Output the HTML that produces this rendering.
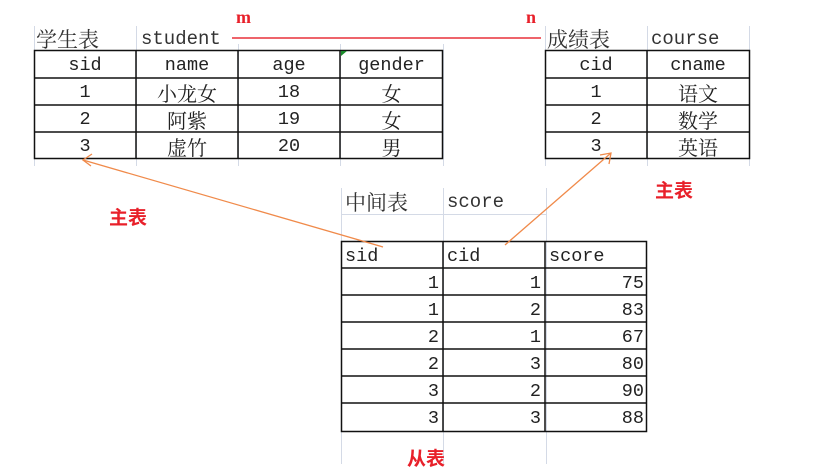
<!DOCTYPE html>
<html><head><meta charset="utf-8"><style>
body{margin:0;width:839px;height:474px;background:#fff;position:relative;overflow:hidden;font-family:"Liberation Mono","Noto Serif CJK SC",monospace;color:#222;}
.c{position:absolute;box-sizing:border-box;font-size:18.5px;line-height:27px;white-space:nowrap;}
.k{font-family:"Noto Serif CJK SC",serif;font-size:20px;line-height:27px;}
.t{position:absolute;font-size:19px;color:#333;white-space:nowrap;}
.tk{font-family:"Noto Serif CJK SC",serif;font-size:21px;}
.r{position:absolute;color:#e8202a;font-weight:bold;font-family:"Noto Sans CJK SC",sans-serif;font-size:19px;}
.g{position:absolute;background:#d4dae6;}
</style></head><body>
<div class="g" style="left:34px;top:26px;width:1px;height:140px"></div>
<div class="g" style="left:136px;top:26px;width:1px;height:140px"></div>
<div class="g" style="left:238px;top:44px;width:1px;height:122px"></div>
<div class="g" style="left:340px;top:44px;width:1px;height:122px"></div>
<div class="g" style="left:443px;top:44px;width:1px;height:122px"></div>
<div class="g" style="left:545px;top:26px;width:1px;height:140px"></div>
<div class="g" style="left:647px;top:26px;width:1px;height:140px"></div>
<div class="g" style="left:749px;top:26px;width:1px;height:140px"></div>
<div class="g" style="left:341px;top:188px;width:1px;height:276px"></div>
<div class="g" style="left:443px;top:188px;width:1px;height:276px"></div>
<div class="g" style="left:546px;top:188px;width:1px;height:276px"></div>
<div class="g" style="left:341px;top:214px;width:205px;height:1px"></div>

<div class="t tk" style="left:36px;top:24px">学生表</div>
<div class="t" style="left:141px;top:28px">student</div>
<div class="t tk" style="left:547px;top:24px">成绩表</div>
<div class="t" style="left:651px;top:28px">course</div>
<div class="t tk" style="left:345px;top:187px">中间表</div>
<div class="t" style="left:447px;top:191px">score</div>

<svg width="839" height="474" style="position:absolute;left:0;top:0" xmlns="http://www.w3.org/2000/svg">
<g stroke="#111" stroke-width="1.5" fill="none">
<rect x="34.5" y="50.5" width="408" height="108"/>
<line x1="34" y1="78" x2="443" y2="78"/><line x1="34" y1="105" x2="443" y2="105"/><line x1="34" y1="132" x2="443" y2="132"/>
<line x1="136" y1="50" x2="136" y2="159"/><line x1="238" y1="50" x2="238" y2="159"/><line x1="340" y1="50" x2="340" y2="159"/>
<rect x="545.5" y="50.5" width="204" height="108"/>
<line x1="545" y1="78" x2="750" y2="78"/><line x1="545" y1="105" x2="750" y2="105"/><line x1="545" y1="132" x2="750" y2="132"/>
<line x1="647" y1="50" x2="647" y2="159"/>
<rect x="341.5" y="241.5" width="305" height="190"/>
<line x1="341" y1="268" x2="647" y2="268"/><line x1="341" y1="295" x2="647" y2="295"/><line x1="341" y1="322" x2="647" y2="322"/>
<line x1="341" y1="349" x2="647" y2="349"/><line x1="341" y1="376" x2="647" y2="376"/><line x1="341" y1="403" x2="647" y2="403"/>
<line x1="443" y1="241" x2="443" y2="432"/><line x1="545" y1="241" x2="545" y2="432"/>
</g>
<polygon points="341,51 347,51 341,56" fill="#1a8a2a"/>
<line x1="232" y1="38" x2="541" y2="38" stroke="#e8303a" stroke-width="1.5"/>
<g stroke="#f08a4a" stroke-width="1.3" fill="none">
<line x1="383" y1="247" x2="83" y2="160"/>
<polyline points="92,154 83,160 91,166"/>
<line x1="505" y1="245" x2="611" y2="153"/>
<polyline points="600,155 611,153 609,164"/>
</g>
</svg>
<div class="r" style="left:236px;top:7px;font-family:'Liberation Serif',serif;font-size:18px">m</div>
<div class="r" style="left:526px;top:7px;font-family:'Liberation Serif',serif;font-size:18px">n</div>
<div class="r" style="left:109px;top:203px">主表</div>
<div class="r" style="left:655px;top:176px">主表</div>
<div class="r" style="left:407px;top:444px">从表</div>

<div class="c" style="left:34px;top:52px;width:102px;text-align:center">sid</div>
<div class="c" style="left:136px;top:52px;width:102px;text-align:center">name</div>
<div class="c" style="left:238px;top:52px;width:102px;text-align:center">age</div>
<div class="c" style="left:340px;top:52px;width:103px;text-align:center">gender</div>
<div class="c" style="left:34px;top:79px;width:102px;text-align:center">1</div>
<div class="c k" style="left:136px;top:79px;width:102px;text-align:center">小龙女</div>
<div class="c" style="left:238px;top:79px;width:102px;text-align:center">18</div>
<div class="c k" style="left:340px;top:79px;width:103px;text-align:center">女</div>
<div class="c" style="left:34px;top:106px;width:102px;text-align:center">2</div>
<div class="c k" style="left:136px;top:106px;width:102px;text-align:center">阿紫</div>
<div class="c" style="left:238px;top:106px;width:102px;text-align:center">19</div>
<div class="c k" style="left:340px;top:106px;width:103px;text-align:center">女</div>
<div class="c" style="left:34px;top:133px;width:102px;text-align:center">3</div>
<div class="c k" style="left:136px;top:133px;width:102px;text-align:center">虚竹</div>
<div class="c" style="left:238px;top:133px;width:102px;text-align:center">20</div>
<div class="c k" style="left:340px;top:133px;width:103px;text-align:center">男</div>
<div class="c" style="left:545px;top:52px;width:102px;text-align:center">cid</div>
<div class="c" style="left:647px;top:52px;width:102px;text-align:center">cname</div>
<div class="c" style="left:545px;top:79px;width:102px;text-align:center">1</div>
<div class="c k" style="left:647px;top:79px;width:102px;text-align:center">语文</div>
<div class="c" style="left:545px;top:106px;width:102px;text-align:center">2</div>
<div class="c k" style="left:647px;top:106px;width:102px;text-align:center">数学</div>
<div class="c" style="left:545px;top:133px;width:102px;text-align:center">3</div>
<div class="c k" style="left:647px;top:133px;width:102px;text-align:center">英语</div>
<div class="c" style="left:345px;top:243px">sid</div>
<div class="c" style="left:447px;top:243px">cid</div>
<div class="c" style="left:549px;top:243px">score</div>
<div class="c" style="left:341px;top:270px;width:98px;text-align:right">1</div><div class="c" style="left:443px;top:270px;width:98px;text-align:right">1</div><div class="c" style="left:545px;top:270px;width:99px;text-align:right">75</div>
<div class="c" style="left:341px;top:297px;width:98px;text-align:right">1</div><div class="c" style="left:443px;top:297px;width:98px;text-align:right">2</div><div class="c" style="left:545px;top:297px;width:99px;text-align:right">83</div>
<div class="c" style="left:341px;top:324px;width:98px;text-align:right">2</div><div class="c" style="left:443px;top:324px;width:98px;text-align:right">1</div><div class="c" style="left:545px;top:324px;width:99px;text-align:right">67</div>
<div class="c" style="left:341px;top:351px;width:98px;text-align:right">2</div><div class="c" style="left:443px;top:351px;width:98px;text-align:right">3</div><div class="c" style="left:545px;top:351px;width:99px;text-align:right">80</div>
<div class="c" style="left:341px;top:378px;width:98px;text-align:right">3</div><div class="c" style="left:443px;top:378px;width:98px;text-align:right">2</div><div class="c" style="left:545px;top:378px;width:99px;text-align:right">90</div>
<div class="c" style="left:341px;top:405px;width:98px;text-align:right">3</div><div class="c" style="left:443px;top:405px;width:98px;text-align:right">3</div><div class="c" style="left:545px;top:405px;width:99px;text-align:right">88</div>
</body></html>
